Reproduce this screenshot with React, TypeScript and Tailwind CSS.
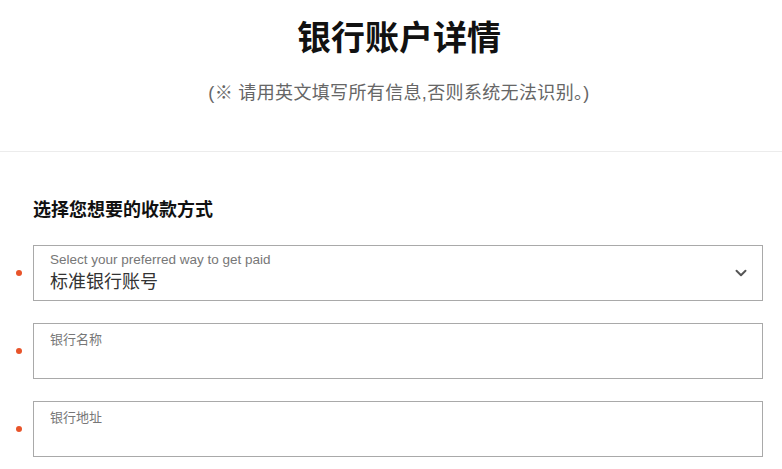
import { ChevronDown } from "lucide-react";

const FONT = "font-['Liberation_Sans','Noto_Sans_CJK_SC',sans-serif]";

function Dot() {
  return <span className="h-[6px] w-[6px] shrink-0 rounded-full bg-[#e8542a]" />;
}

function Field({ label }: { label: string }) {
  return (
    <div className="flex items-center gap-[11px]">
      <Dot />
      <div className="h-[56px] flex-1 border border-[#a9a9a9] px-4 pt-[8px]">
        <div className="text-[13px] leading-4 text-[#777]">{label}</div>
      </div>
    </div>
  );
}

export default function App() {
  return (
    <div className={`min-h-screen bg-white text-[#111] ${FONT}`}>
      <header className="h-[152px] border-b border-[#ececec] pl-4 text-center">
        <h1 className="pt-[17px] text-[34px] font-bold leading-[42px]">银行账户详情</h1>
        <p className="mt-[22px] text-[18px] leading-6 tracking-[0.35px] text-[#666]">
          (※ 请用英文填写所有信息,否则系统无法识别。)
        </p>
      </header>

      <section className="pl-4 pr-[19px]">
        <h2 className="ml-[17px] mt-[46px] text-[18px] font-bold leading-6">选择您想要的收款方式</h2>

        <div className="mt-[23px] flex flex-col gap-[22px]">
          <div className="flex items-center gap-[11px]">
            <Dot />
            <div className="flex h-[56px] flex-1 items-center border border-[#a9a9a9] pl-4 pr-[12px]">
              <div className="flex-1">
                <div className="text-[13.5px] leading-4 text-[#777]">Select your preferred way to get paid</div>
                <div className="mt-[2px] text-[18px] leading-6 text-[#333]">标准银行账号</div>
              </div>
              <ChevronDown size={18} strokeWidth={2.6} className="text-[#555]" />
            </div>
          </div>
          <Field label="银行名称" />
          <Field label="银行地址" />
        </div>
      </section>
    </div>
  );
}
